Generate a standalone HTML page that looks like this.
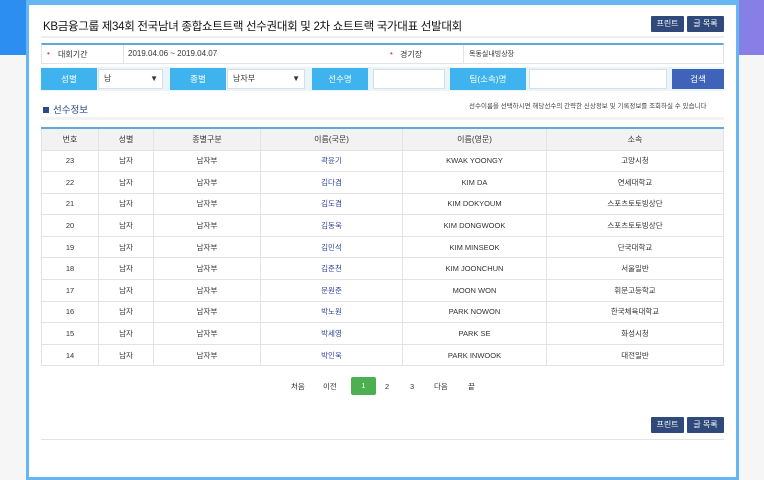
<!DOCTYPE html>
<html><head><meta charset="utf-8"><style>
*{margin:0;padding:0;box-sizing:border-box}
body{width:764px;height:449px;overflow:hidden;background:#f6f6f6;font-family:"Liberation Sans","Noto Sans CJK KR",sans-serif;font-size:8px;color:#333;position:relative}
.bg{position:absolute;left:0;top:0;width:764px;height:55px;background:linear-gradient(100deg,#2b8ef0 0%,#3a95ee 40%,#6d86e8 80%,#8a7ee6 100%)}
.panel{position:absolute;left:26px;top:0;width:713px;height:480px;background:#fff;border:3px solid #66b6f4;border-top:5px solid #66b6f4}
.abs{position:absolute}
.btn{position:absolute;height:16px;background:#2f4a7a;color:#fff;font-size:8px;line-height:16px;text-align:center;border-radius:1px}
.title{left:14px;top:13px;font-size:11.5px;color:#111;letter-spacing:-0.3px}
.info{left:12px;top:38px;width:683px;height:21px;border:1px solid #e3e3e3;border-top:2px solid #5fa8d8}
.info span{position:absolute;top:4px;font-size:8px}
.dot{color:#e0443c}
.lab{position:absolute;top:63px;height:22px;background:#3fb3ee;color:#fff;text-align:center;line-height:22px;font-size:8.5px}
.inp{position:absolute;top:64px;height:20px;background:#fff;border:1px solid #ddd;font-size:8px;line-height:18px;padding-left:5px}
.row{position:absolute;top:62px;left:12px;width:683px;height:24px;background:#e9f5fd}
table{position:absolute;left:12px;top:122px;width:683px;border-collapse:collapse;border-top:2px solid #5fa8d8}
td,th{border:1px solid #e3e3e3;text-align:center;font-size:7.5px;font-weight:normal;height:21.6px}
th{background:#f2f2f2;height:22px;font-size:8px}
td.n{color:#3344a0}
.pg{position:absolute;top:373px;font-size:7.5px;line-height:18px}
</style></head><body>
<div class="bg"></div>
<div class="panel">
<div class="abs title">KB금융그룹 제34회 전국남녀 종합쇼트트랙 선수권대회 및 2차 쇼트트랙 국가대표 선발대회</div>
<div class="btn" style="left:622px;top:11px;width:33px">프린트</div>
<div class="btn" style="left:658px;top:11px;width:37px">글 목록</div>
<div class="abs" style="left:12px;top:31px;width:683px;height:2px;background:#eee"></div>
<div class="abs info"><span class="dot" style="left:5px">•</span><span style="left:16px">대회기간</span><span style="left:81px;border-left:1px solid #e3e3e3;top:0;height:18px"></span><span style="left:86px">2019.04.06 ~ 2019.04.07</span><span class="dot" style="left:348px">•</span><span style="left:358px">경기장</span><span style="left:421px;border-left:1px solid #e3e3e3;top:0;height:18px"></span><span style="left:427px;font-size:7px">목동실내빙상장</span></div>
<div class="row"></div>
<div class="lab" style="left:12px;width:56px">성별</div>
<div class="inp" style="left:69px;width:65px">남<span style="position:absolute;right:4px">▼</span></div>
<div class="lab" style="left:141px;width:56px">종별</div>
<div class="inp" style="left:198px;width:78px">남자부<span style="position:absolute;right:4px">▼</span></div>
<div class="lab" style="left:283px;width:56px">선수명</div>
<div class="inp" style="left:344px;width:72px"></div>
<div class="lab" style="left:421px;width:76px">팀(소속)명</div>
<div class="inp" style="left:500px;width:138px"></div>
<div class="lab" style="left:643px;width:52px;background:#3e63b8;top:64px;height:20px;line-height:20px">검색</div>
<div class="abs" style="left:14px;top:97px;font-size:9.5px;color:#2a4a8a"><span style="display:inline-block;width:6px;height:6px;background:#2a4a8a;margin-right:4px"></span>선수정보</div>
<div class="abs" style="left:440px;top:95px;font-size:6.5px;color:#444">선수이름을 선택하시면 해당선수의 간략한 신상정보 및 기록정보를 조회하실 수 있습니다</div>
<div class="abs" style="left:12px;top:112px;width:683px;height:3px;background:#f3f3f3"></div>
<table>
<tr><th style="width:57px">번호</th><th style="width:55px">성별</th><th style="width:107px">종별구분</th><th style="width:142px">이름(국문)</th><th style="width:144px">이름(영문)</th><th>소속</th></tr>
<tr><td>23</td><td>남자</td><td>남자부</td><td class="n">곽윤기</td><td>KWAK YOONGY</td><td>고양시청</td></tr>
<tr><td>22</td><td>남자</td><td>남자부</td><td class="n">김다겸</td><td>KIM DA</td><td>연세대학교</td></tr>
<tr><td>21</td><td>남자</td><td>남자부</td><td class="n">김도겸</td><td>KIM DOKYOUM</td><td>스포츠토토빙상단</td></tr>
<tr><td>20</td><td>남자</td><td>남자부</td><td class="n">김동욱</td><td>KIM DONGWOOK</td><td>스포츠토토빙상단</td></tr>
<tr><td>19</td><td>남자</td><td>남자부</td><td class="n">김민석</td><td>KIM MINSEOK</td><td>단국대학교</td></tr>
<tr><td>18</td><td>남자</td><td>남자부</td><td class="n">김준천</td><td>KIM JOONCHUN</td><td>서울일반</td></tr>
<tr><td>17</td><td>남자</td><td>남자부</td><td class="n">문원준</td><td>MOON WON</td><td>휘문고등학교</td></tr>
<tr><td>16</td><td>남자</td><td>남자부</td><td class="n">박노원</td><td>PARK NOWON</td><td>한국체육대학교</td></tr>
<tr><td>15</td><td>남자</td><td>남자부</td><td class="n">박세영</td><td>PARK SE</td><td>화성시청</td></tr>
<tr><td>14</td><td>남자</td><td>남자부</td><td class="n">박인욱</td><td>PARK INWOOK</td><td>대전일반</td></tr>
</table>
<span class="pg" style="left:262px">처음</span>
<span class="pg" style="left:294px">이전</span>
<span class="pg" style="left:322px;top:372px;width:25px;height:18px;background:#4caf50;color:#fff;text-align:center;border-radius:2px">1</span>
<span class="pg" style="left:356px">2</span>
<span class="pg" style="left:381px">3</span>
<span class="pg" style="left:405px">다음</span>
<span class="pg" style="left:439px">끝</span>
<div class="btn" style="left:622px;top:412px;width:33px">프린트</div>
<div class="btn" style="left:658px;top:412px;width:37px">글 목록</div>
<div class="abs" style="left:12px;top:434px;width:683px;height:1px;background:#e3e3e3"></div>
</div>
</body></html>
